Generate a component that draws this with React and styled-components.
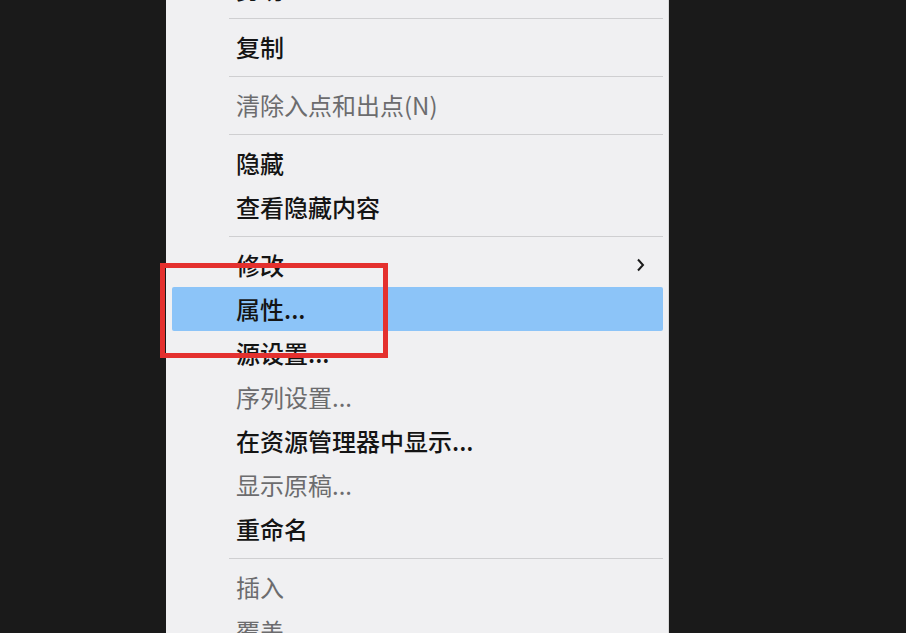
import React from 'react';
import styled, { createGlobalStyle } from 'styled-components';

const GlobalStyle = createGlobalStyle`
  html, body {
    margin: 0;
    padding: 0;
    background: #1a1a1a;
  }
  body {
    font-family: "Noto Sans CJK SC", "Noto Sans", sans-serif;
  }
`;

const items = [
  { label: '剪切' },
  { sep: true },
  { label: '复制' },
  { sep: true },
  { label: '清除入点和出点(N)', disabled: true },
  { sep: true },
  { label: '隐藏' },
  { label: '查看隐藏内容' },
  { sep: true },
  { label: '修改', submenu: true },
  { label: '属性...', active: true },
  { label: '源设置...' },
  { label: '序列设置...', disabled: true },
  { label: '在资源管理器中显示...' },
  { label: '显示原稿...', disabled: true },
  { label: '重命名' },
  { sep: true },
  { label: '插入', disabled: true },
  { label: '覆盖', disabled: true },
];

export default function App() {
  return (
    <Page>
      <GlobalStyle />
      <Menu>
        {items.map((item, i) =>
          item.sep ? (
            <Separator key={i} />
          ) : (
            <Item key={i} $active={item.active} $disabled={item.disabled}>
              <Label>{item.label}</Label>
              {item.submenu && (
                <svg width="9" height="14" viewBox="0 0 9 14">
                  <path
                    d="M2 1.5 L7 7 L2 12.5"
                    fill="none"
                    stroke="#1b1b1b"
                    strokeWidth="2"
                  />
                </svg>
              )}
            </Item>
          )
        )}
      </Menu>
      <Annotation />
    </Page>
  );
}

const Page = styled.div`
  position: relative;
  display: flex;
  width: 906px;
  height: 633px;
  overflow: hidden;
  background: #1a1a1a;
`;

const Menu = styled.div`
  display: flex;
  flex-direction: column;
  margin-left: 166px;
  margin-top: -33px;
  width: 503px;
  padding: 0 5px 0 6px;
  box-sizing: border-box;
  background: #f0f0f2;
  border-right: 1px solid #d8d8d8;
`;

const Item = styled.div`
  display: flex;
  align-items: center;
  justify-content: space-between;
  flex: none;
  height: 44px;
  padding: 0 18px 0 64px;
  border-radius: 2px;
  font-size: 24px;
  font-weight: ${p => (p.$disabled ? 400 : 500)};
  color: ${p => (p.$disabled ? '#6c6c6e' : '#141414')};
  background: ${p => (p.$active ? '#8cc4f8' : 'transparent')};
`;

const Label = styled.span`
  white-space: nowrap;
  margin-top: -2px;
`;

const Separator = styled.div`
  flex: none;
  height: 1px;
  margin: 7px 0 6px 57px;
  background: #cfcfd1;
`;

const Annotation = styled.div`
  position: absolute;
  left: 160px;
  top: 263px;
  width: 228px;
  height: 95px;
  box-sizing: border-box;
  border: 5px solid #e4302e;
  pointer-events: none;
`;
